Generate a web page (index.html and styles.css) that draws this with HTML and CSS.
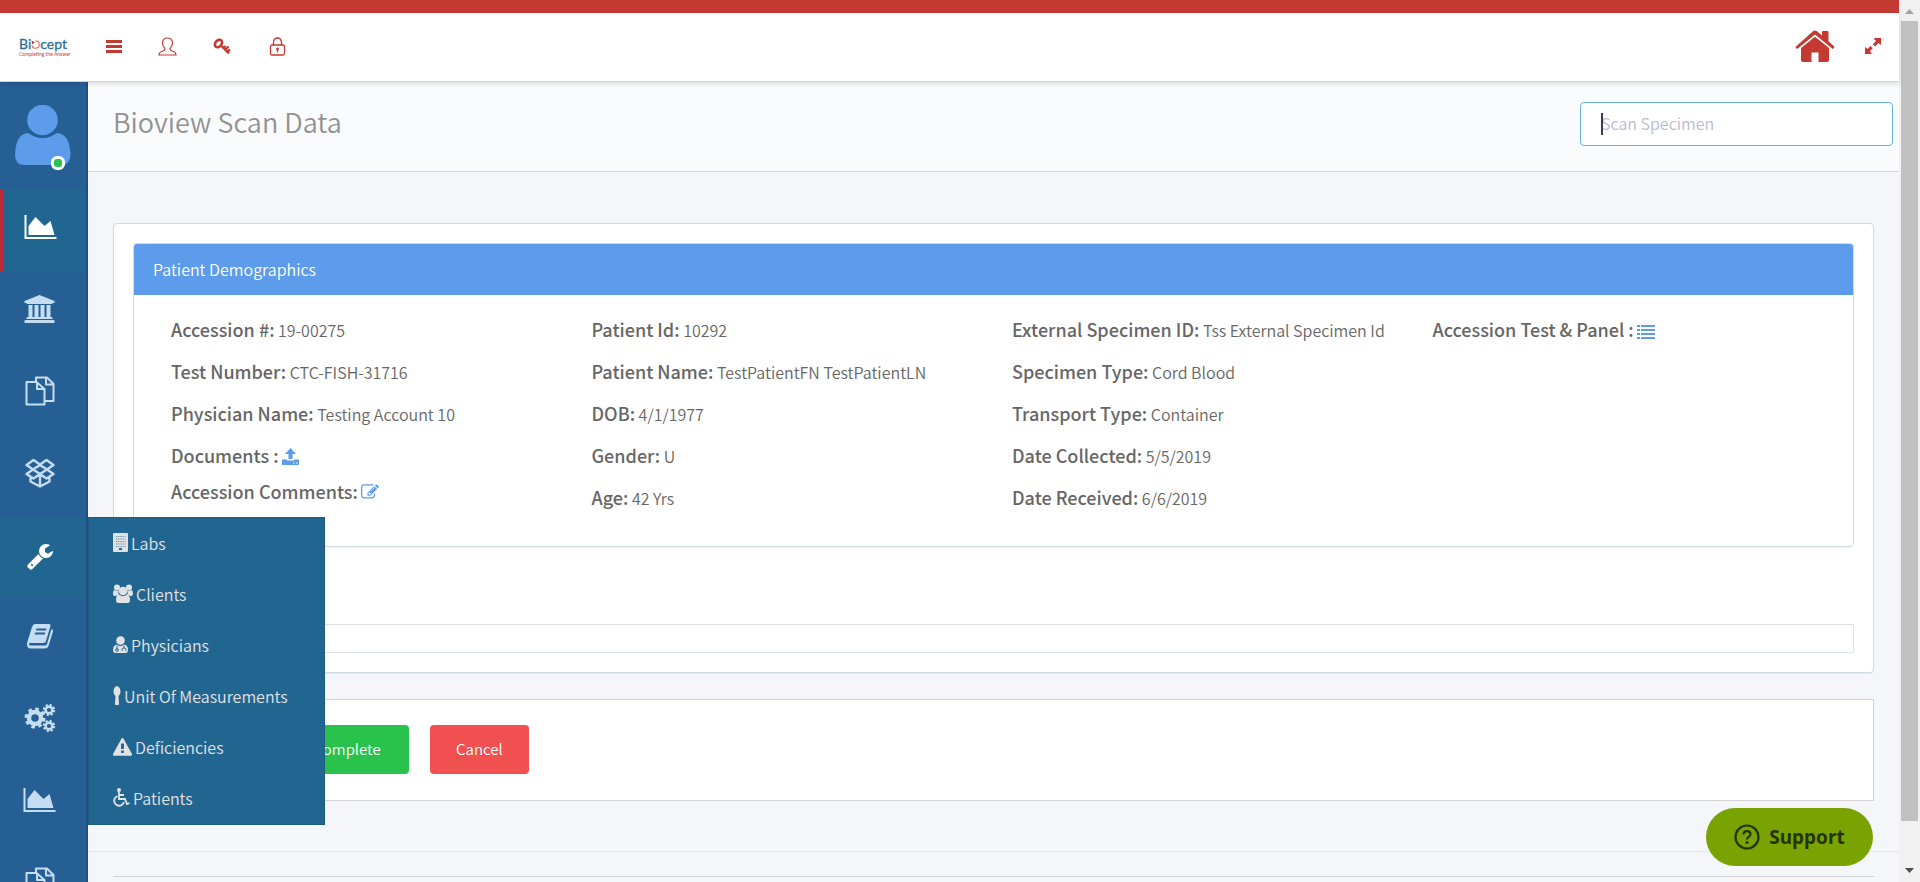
FILE: index.html
```html
<!DOCTYPE html>
<html lang="en">
<head>
<meta charset="utf-8">
<title>Bioview Scan Data</title>
<link rel="stylesheet" href="styles.css">
</head>
<body>
<svg class="sprite" aria-hidden="true">
  <symbol id="i-area" viewBox="0 0 2048 1792"><path d="M2048 1536v128H0V128h128v1408zM1664 512l256 896H256V832l448-576 576 576z"/></symbol>
  <symbol id="i-bank" viewBox="0 0 1920 1792"><path d="M960 0l960 384v128h-128q0 26-20.5 45t-48.5 19h-1526q-28 0-48.5-19t-20.5-45h-128v-128zM256 640h256v768h128v-768h256v768h128v-768h256v768h128v-768h256v768h59q28 0 48.5 19t20.5 45v64h-1664v-64q0-26 20.5-45t48.5-19h59zM1851 1600q28 0 48.5 19t20.5 45v128h-1920v-128q0-26 20.5-45t48.5-19z"/></symbol>
  <symbol id="i-docs" viewBox="0 0 30 30"><g fill="none" stroke="currentColor" stroke-width="2" stroke-linejoin="round"><path d="M1.500 6H11.500L19.500 13V28.500H1.500ZM12 6V13H19M11 5.500V1.500H22L28.500 8V25H20M21 2V8.500H28"/></g></symbol>
  <symbol id="i-box" viewBox="0 0 30 30"><g fill="none" stroke="currentColor" stroke-width="2.400" stroke-linejoin="round"><path d="M8.500 2L15 6.500L21.500 2L28.500 7L22 11.500L28.500 16L21.500 20.500L15 16L8.500 20.500L1.500 16L8 11.500L1.500 7ZM8 11.500L15 7L22 11.500L15 16ZM5.500 19V23.500L15 28.500L24.500 23.500V19M15 17V28"/></g></symbol>
  <symbol id="i-wrench" viewBox="0 0 1792 1792"><path d="M448 1472q0-26-19-45t-45-19-45 19-19 45 19 45 45 19 45-19 19-45zm644-420l-682 682q-37 37-90 37-52 0-91-37l-106-108q-38-36-38-90 0-53 38-91l681-681q39 98 114.500 173.500t173.500 114.500zm634-435q0 39-23 106-47 134-164.500 217.500t-258.500 83.500q-185 0-316.500-131.500t-131.500-316.500 131.500-316.500 316.500-131.500q58 0 121.500 16.500t107.500 46.500q16 11 16 28t-16 28l-293 169v224l193 107q5-3 79-48.500t135.500-81 70.500-35.500q15 0 23.500 10t8.500 25z"/></symbol>
  <symbol id="i-book" viewBox="0 0 28 26"><path fill-rule="evenodd" d="M9 1H23Q25 1 24.500 3L20 18Q19.500 20 17.500 20H4Q3 20 3 21Q3 22.500 5 22.500H19Q20.500 22.500 21 21L25.500 6Q27.500 6.500 27 8.500L22.500 23Q21.500 25.500 19 25.500H5Q1 25.500 1 21.500Q1 20 1.500 18.500L6 4Q7 1 9 1ZM10.500 5.500L10 7.500H20L20.500 5.500ZM9.200 9.500L8.700 11.500H18.700L19.200 9.500Z"/></symbol>
  <symbol id="i-cogs" viewBox="0 0 32 30"><g fill="none" stroke="currentColor"><circle cx="11" cy="15" r="6" stroke-width="4.500"/><circle cx="11" cy="15" r="9" stroke-width="3" stroke-dasharray="3.570 3.500"/><circle cx="25" cy="7" r="3.400" stroke-width="2.600"/><circle cx="25" cy="7" r="5.200" stroke-width="2" stroke-dasharray="2.100 1.984"/><circle cx="25" cy="23" r="3.400" stroke-width="2.600"/><circle cx="25" cy="23" r="5.200" stroke-width="2" stroke-dasharray="2.100 1.984"/></g></symbol>
  <symbol id="i-user" viewBox="0 0 19 19"><path fill="none" stroke="currentColor" stroke-width="1.200" d="M7 11.500Q4.500 9 4.500 5.500Q5 1 9.500 1Q14 1 14.500 5.500Q14.500 9 12 11.500Q12 13 14 14Q18 15 18 18H1Q1 15 5 14Q7 13 7 11.500Z"/></symbol>
  <symbol id="i-key" viewBox="0 0 20 17"><g fill="none" stroke="currentColor"><ellipse cx="5.500" cy="5.500" rx="3" ry="4.200" transform="rotate(42 5.500 5.500)" stroke-width="2.600"/><path stroke-width="2.300" d="M8.500 8L16 15.500M12.500 11.500L15.500 8.500M10.800 9.800L12.500 8M14.500 13.500L17 11.500"/></g></symbol>
  <symbol id="i-lock" viewBox="0 0 17 19"><g fill="none" stroke="currentColor" stroke-width="1.300"><rect x="1.500" y="8" width="14" height="10" rx="1.500"/><path d="M4.500 8V5Q5 1 8.500 1Q12 1 12.500 5V8M8.500 12V15.500"/></g><circle cx="8.500" cy="12" r="1.400"/></symbol>
  <symbol id="i-home" viewBox="0 0 40 32"><path d="M1 16.500L18 1.200Q20 0 22 1.200L27 5.500V2Q27 1 28 1H32.500Q33.500 1 33.500 2V11.300L39 16.200Q39.800 17 39 18L37.800 19L20 4.500L2.200 19L1 18Q.2 17 1 16.500ZM6 18L20 6.800L34 18V30Q34 32 32 32H23.500V22.500H16.500V32H8Q6 32 6 30Z"/></symbol>
  <symbol id="i-expand" viewBox="0 0 16 16"><path d="M9 1Q9 0 10 0H16V6Q16 7 15 6.500L13.500 5L10 8.500L7.800 6.200L11 3ZM0 10Q0 9 1 9.500L2.500 11L5.500 8L7.800 10.200L4.800 13.200L6.500 15Q7 16 6 16H0Z"/></symbol>
  <symbol id="i-upload" viewBox="0 0 17 17"><path d="M8.500 0L14 6H10.500V11H6.500V6H3ZM0 11.500H5V12.500H12V11.500H17V17H0ZM11 14.500V15.500H12.500V14.500ZM14 14.500V15.500H15.500V14.500Z" fill-rule="evenodd"/></symbol>
  <symbol id="i-edit" viewBox="0 0 1792 1792"><path fill-rule="evenodd" d="M888 1184l116-116-152-152-116 116v56h96v96h56zm440-720q-16-16-33 1l-350 350q-17 17-1 33t33-1l350-350q17-17 1-33zm80 594v190q0 119-84.500 203.500t-203.500 84.500h-832q-119 0-203.500-84.500t-84.500-203.500v-832q0-119 84.500-203.500t203.500-84.500h832q63 0 117 25 15 7 18 23 3 17-9 29l-49 49q-14 14-32 8-23-6-45-6h-832q-66 0-113 47t-47 113v832q0 66 47 113t113 47h832q66 0 113-47t47-113v-126q0-13 9-22l64-64q15-15 35-7t20 29zm-96-738l288 288-672 672h-288v-288zm444 132l-92 92-288-288 92-92q28-28 68-28t68 28l152 152q28 28 28 68t-28 68z"/></symbol>
  <symbol id="i-list" viewBox="0 0 18 14"><path d="M0 0H3V2H0ZM4 0H18V2H4ZM0 4H3V6H0ZM4 4H18V6H4ZM0 8H3V10H0ZM4 8H18V10H4ZM0 12H3V14H0ZM4 12H18V14H4Z"/></symbol>
  <symbol id="i-building" viewBox="0 0 15 19"><path fill-rule="evenodd" d="M1 0H14Q15 0 15 1V18Q15 19 14 19H1Q0 19 0 18V1Q0 0 1 0ZM6 15V17H9V15Z"/><path stroke="#216691" stroke-width="1" stroke-opacity=".7" stroke-dasharray="1.200 1" d="M3 3.500H12.500M3 6H12.500M3 8.500H12.500M3 11H12.500M3 13.500H12.500"/></symbol>
  <symbol id="i-users" viewBox="0 0 20 19"><circle cx="4" cy="3.500" r="3"/><circle cx="16" cy="3.500" r="3"/><path d="M0 10Q0 6 2 6Q4 7.500 6 6.500Q4.500 9 6 10.500Q4 11 3 12H2Q0 12 0 10ZM20 10Q20 6 18 6Q16 7.500 14 6.500Q15.500 9 14 10.500Q16 11 17 12H18Q20 12 20 10ZM3 16Q3 11 6 10.500Q10 14 14 10.500Q17 11 17 16Q17 19 14.500 19H5.500Q3 19 3 16Z"/><circle cx="10" cy="7" r="4.300"/></symbol>
  <symbol id="i-doctor" viewBox="0 0 15 17"><circle cx="7.500" cy="4.500" r="4.300"/><path d="M0 14Q0 9 4 8.500Q7.500 11.500 11 8.500Q15 9 15 14Q15 17 12.500 17H2.500Q0 17 0 14Z"/><path fill="none" stroke="#216691" d="M4 9.500V13M11 9.500V12M9 15V13.500Q9 12 11 12Q13 12 13 13.500V15"/><circle cx="4" cy="14" r="1.300" fill="none" stroke="#216691"/></symbol>
  <symbol id="i-spoon" viewBox="0 0 8 19"><path d="M4 0Q7.500 1 7.500 6Q7.500 8.500 5.500 10L6 18Q6 19 5 19H3Q2 19 2 18L2.500 10Q.5 8.500 .5 6Q.5 1 4 0Z"/></symbol>
  <symbol id="i-warn" viewBox="0 0 1792 1664"><path fill-rule="evenodd" d="M1024 1375v-190q0-14-9.500-23.500t-22.500-9.500h-192q-13 0-22.500 9.500t-9.500 23.500v190q0 14 9.500 23.500t22.500 9.500h192q13 0 22.500-9.500t9.500-23.500zm-2-374l18-459q0-12-10-19-13-11-24-11h-220q-11 0-24 11-10 7-10 21l17 457q0 10 10 16.500t24 6.500h185q14 0 23.500-6.500t10.500-16.500zm-14-934l768 1408q35 63-2 126-17 29-46.500 46t-63.500 17h-1536q-34 0-63.500-17t-46.500-46q-37-63-2-126l768-1408q17-31 47-49t65-18 65 18 47 49z"/></symbol>
  <symbol id="i-wheel" viewBox="0 0 17 19"><circle cx="6" cy="2" r="2"/><path fill="none" stroke="currentColor" stroke-width="1.800" d="M6 3V11H12L14 16L16.500 15M6 7H11M4.500 8A5 5 0 1 0 11 14"/></symbol>
</svg>

<div class="app">
  <div class="topline"></div>
  <header class="header">
    <a class="logo" href="#" aria-label="Biocept home">
      <span class="logo-name">Bi<svg viewBox="0 0 9 9"><path d="M4.500 .8A3.700 3.700 0 1 1 1 5.500" fill="none" stroke="#e07a72" stroke-width="1.200"/><path d="M.5 .5L4 2.200L1.200 4.500Z" fill="#c43a33"/></svg>cept</span>
      <span class="logo-tag">Completing the Answer</span>
    </a>
    <nav class="tools">
      <button class="tool" aria-label="Toggle menu"><span class="burger"></span></button>
      <button class="tool" aria-label="Profile"><svg width="19" height="19"><use href="#i-user"/></svg></button>
      <button class="tool" aria-label="Change password"><svg width="20" height="17"><use href="#i-key"/></svg></button>
      <button class="tool" aria-label="Lock"><svg width="17" height="19"><use href="#i-lock"/></svg></button>
    </nav>
    <a class="home" href="#" aria-label="Home"><svg width="40" height="32"><use href="#i-home"/></svg></a>
    <button class="expand" aria-label="Full screen"><svg width="16" height="16"><use href="#i-expand"/></svg></button>
  </header>

  <div class="body">
    <aside class="sidebar">
      <div class="avatar">
        <svg width="56" height="62" viewBox="0 0 56 62"><path d="M13 28Q27.500 38 42 28Q55 29 55.500 50Q55 60 46 60H9.500Q0 60 0 50Q.500 29 13 28Z"/><circle cx="27.500" cy="15.500" r="17.500" fill="#265f93"/><circle cx="27.500" cy="15" r="15.300"/></svg>
        <span class="online"></span>
      </div>
      <nav class="side-nav">
        <a class="side-item current selected" href="#" aria-label="Dashboard"><svg width="33" height="28"><use href="#i-area"/></svg></a>
        <a class="side-item" href="#" aria-label="Institution"><svg width="31" height="28"><use href="#i-bank"/></svg></a>
        <a class="side-item" href="#" aria-label="Documents"><svg width="30" height="30"><use href="#i-docs"/></svg></a>
        <a class="side-item" href="#" aria-label="Packages"><svg width="30" height="30"><use href="#i-box"/></svg></a>
        <div class="side-group">
          <a class="side-item current" href="#" aria-label="Setup"><svg width="28" height="28"><use href="#i-wrench"/></svg></a>
          <div class="flyout">
            <a href="#"><svg width="15" height="19"><use href="#i-building"/></svg>Labs</a>
            <a href="#"><svg width="20" height="19"><use href="#i-users"/></svg>Clients</a>
            <a href="#"><svg width="15" height="17"><use href="#i-doctor"/></svg>Physicians</a>
            <a href="#"><svg width="8" height="19"><use href="#i-spoon"/></svg>Unit Of Measurements</a>
            <a href="#"><svg width="19" height="18"><use href="#i-warn"/></svg>Deficiencies</a>
            <a href="#"><svg width="17" height="19"><use href="#i-wheel"/></svg>Patients</a>
          </div>
        </div>
        <a class="side-item" href="#" aria-label="Library"><svg width="28" height="26"><use href="#i-book"/></svg></a>
        <a class="side-item" href="#" aria-label="Settings"><svg width="32" height="30"><use href="#i-cogs"/></svg></a>
        <a class="side-item" href="#" aria-label="Reports"><svg width="33" height="28"><use href="#i-area"/></svg></a>
        <a class="side-item" href="#" aria-label="Files"><svg width="30" height="30"><use href="#i-docs"/></svg></a>
      </nav>
    </aside>

    <main class="main">
      <div class="titlebar">
        <h1>Bioview Scan Data</h1>
        <div class="scan"><span class="caret"></span><input type="text" placeholder="Scan Specimen" aria-label="Scan Specimen"></div>
      </div>
      <div class="content">
        <section class="card">
          <section class="panel">
            <h2>Patient Demographics</h2>
            <div class="facts">
              <div class="col">
                <p><b>Accession #:</b> 19-00275</p>
                <p><b>Test Number:</b> CTC-FISH-31716</p>
                <p><b>Physician Name:</b> Testing Account 10</p>
                <p class="tight"><b>Documents :</b> <a href="#" aria-label="Upload"><svg width="17" height="17"><use href="#i-upload"/></svg></a></p>
                <p><b>Accession Comments:</b> <a href="#" aria-label="Edit comments"><svg width="18" height="18"><use href="#i-edit"/></svg></a></p>
              </div>
              <div class="col">
                <p><b>Patient Id:</b> 10292</p>
                <p><b>Patient Name:</b> TestPatientFN TestPatientLN</p>
                <p><b>DOB:</b> 4/1/1977</p>
                <p><b>Gender:</b> U</p>
                <p><b>Age:</b> 42 Yrs</p>
              </div>
              <div class="col">
                <p><b>External Specimen ID:</b> Tss External Specimen Id</p>
                <p><b>Specimen Type:</b> Cord Blood</p>
                <p><b>Transport Type:</b> Container</p>
                <p><b>Date Collected:</b> 5/5/2019</p>
                <p><b>Date Received:</b> 6/6/2019</p>
              </div>
              <div class="col">
                <p><b>Accession Test &amp; Panel :</b> <a href="#" aria-label="Test list"><svg width="18" height="14"><use href="#i-list"/></svg></a></p>
              </div>
            </div>
          </section>
          <div class="grid-empty"></div>
        </section>
        <section class="actions">
          <button class="btn ok">Complete</button>
          <button class="btn cancel">Cancel</button>
        </section>
      </div>
      <footer class="footer"><hr></footer>
      <button class="support"><svg width="26" height="26" viewBox="0 0 26 26"><g fill="none" stroke="currentColor" stroke-width="2.200"><circle cx="13" cy="13" r="11.500"/><path d="M9.500 10.500Q9.500 7.200 13 7.200Q16.500 7.200 16.500 10.200Q16.500 12 14.500 13Q13 13.800 13 15.500"/></g><circle cx="13" cy="18.500" r="1.500"/></svg>Support</button>
    </main>
  </div>
</div>
<div class="scrollbar" aria-hidden="true">
  <svg width="9" height="5" viewBox="0 0 9 5"><path fill="#a3a3a3" d="M0 5L4.500 0L9 5Z"/></svg>
  <span class="thumb"></span>
  <svg width="9" height="5" viewBox="0 0 9 5"><path fill="#505050" d="M0 0H9L4.500 5Z"/></svg>
</div>
</body>
</html>
```
FILE: styles.css
```css
* { box-sizing: border-box; }
body {
  margin: 0;
  height: 100vh;
  display: flex;
  overflow: hidden;
  font-family: "Noto Sans CJK SC", "Open Sans", sans-serif;
  font-size: 16px;
  font-weight: 350;
  line-height: 26px;
  color: #666;
  background: #f5f6fa;
}
svg { fill: currentColor; flex: none; }
a { color: inherit; text-decoration: none; }
button { font: inherit; border: 0; background: none; padding: 0; cursor: pointer; color: inherit; }
h1, h2, p { margin: 0; }
.sprite { position: absolute; width: 0; height: 0; }

.app { flex: 1; min-width: 0; display: flex; flex-direction: column; }
.topline { flex: none; height: 13px; background: #c43a33; }
.header {
  flex: none;
  height: 69px;
  display: flex;
  align-items: center;
  padding: 0 18px 2px 19px;
  background: #fff;
  border-bottom: 1px solid #cfd6d8;
  box-shadow: 0 2px 5px rgba(0, 0, 0, .12);
  color: #c43a33;
  position: relative;
  z-index: 2;
}
.logo { width: 87px; display: flex; flex-direction: column; }
.logo-name { font: 14px/15px Lato, sans-serif; color: #2b6f98; display: flex; align-items: center; -webkit-text-stroke: 0.3px #2b6f98; }
.logo-name svg { width: 9px; height: 9px; margin-top: 3px; }
.logo-tag { font: 5px/6px Lato, sans-serif; }
.tools { flex: 1; display: flex; align-items: center; gap: 36px; }
.tool { display: flex; }
.burger { width: 16px; height: 13px; border-top: 3px solid; border-bottom: 3px solid; display: flex; align-items: center; }
.burger::before { content: ""; width: 16px; height: 3px; background: currentColor; }
.home { display: flex; margin-right: 30px; }
.expand { display: flex; }

.body { flex: 1; min-height: 0; display: flex; }
.sidebar { width: 88px; flex: none; background: #265f93; border-right: 2px solid #1f5080; color: #c5ddf2; position: relative; z-index: 1; }
.avatar { height: 107px; padding: 23px 0 0 15px; color: #5d9beb; position: relative; }
.online { position: absolute; left: 51px; top: 74px; width: 14px; height: 14px; border: 3px solid #fff; border-radius: 6px; background: #28c24c; }
.side-item { height: 82px; padding: 0 7px 7px 0; display: flex; align-items: center; justify-content: center; }
.current { height: 81px; padding-bottom: 3px; background: #216691; color: #fff; }
.selected { height: 82px; padding-bottom: 6px; border-left: 4px solid #bd2c33; padding-right: 10px; }
.side-group { position: relative; }
.flyout {
  position: absolute;
  left: 88px;
  top: 0;
  width: 237px;
  background: #216691;
  border: 1px solid #1e5a82;
  color: #e2e2e4;
}
.flyout a { height: 51px; padding: 0 0 2px 24px; display: flex; align-items: center; gap: 3px; }

.main { flex: 1; min-width: 0; position: relative; display: flex; flex-direction: column; }
.titlebar {
  height: 90px;
  flex: none;
  display: flex;
  align-items: center;
  justify-content: space-between;
  padding: 0 6px 6px 25px;
  background: #fafbfd;
  border-bottom: 1px solid #cfd9e0;
}
h1 { font-size: 27px; line-height: 36px; font-weight: 350; color: #929292; margin-bottom: 4px; }
.scan { position: relative; width: 313px; }
.scan input {
  width: 100%;
  height: 44px;
  border: 1px solid #66afe9;
  border-radius: 4px;
  padding: 0 20px 2px;
  font: inherit;
  background: #fff;
  outline: 0;
}
.scan input::placeholder { color: #b9bccd; opacity: 1; }
.caret { position: absolute; left: 21px; top: 11px; width: 2px; height: 22px; background: #3a3a50; }

.content { flex: none; padding: 51px 25px 0; }
.card { background: #fff; border: 1px solid #cfdbe2; border-radius: 4px; padding: 19px; box-shadow: 0 1px 1px rgba(0, 0, 0, .05); }
.panel { border: 1px solid #cfdbe2; border-radius: 4px; overflow: hidden; box-shadow: 0 1px 1px rgba(0, 0, 0, .05); }
h2 { padding: 12px 19px; font-size: 16px; line-height: 27px; font-weight: 350; color: #fff; background: #5d9beb; }
.facts { display: grid; grid-template-columns: repeat(4, 1fr); padding: 22px 0 35px 37px; }
.col p { line-height: 26px; margin-bottom: 16px; white-space: nowrap; }
.col p:last-child { margin-bottom: 0; }
.col .tight { margin-bottom: 10px; }
b { font-size: 18px; line-height: 20px; font-weight: 500; }
.col a { color: #5d9beb; }
.col a svg { vertical-align: -2px; }
.grid-empty { margin-top: 77px; height: 29px; border: 1px solid #dde6e9; border-top-color: #ddd; }
.actions { margin-top: 26px; background: #fff; border: 1px solid #d3d3d3; padding: 25px 25px 26px 171px; display: flex; gap: 21px; }
.btn { height: 49px; padding: 0 26px 2px; border-radius: 4px; color: #fff; font-size: 15px; }
.ok { background: #28c24c; min-width: 124px; }
.cancel { background: #f05050; }
.footer { margin-top: 50px; padding: 24px 25px 0; border-top: 1px solid #e4eaec; }
.footer hr { margin: 0; border: 0; border-top: 1px solid #cfd3d6; }
.support {
  position: absolute;
  right: 26px;
  bottom: 16px;
  height: 58px;
  width: 167px;
  border-radius: 29px;
  background: #78a300;
  color: #25330a;
  font: 700 19px/26px "Noto Sans", sans-serif;
  display: flex;
  align-items: center;
  justify-content: center;
  gap: 9px;
}

.scrollbar { width: 21px; flex: none; background: #f1f1f1; display: flex; flex-direction: column; align-items: center; padding: 9px 0; }
.thumb { width: 17px; flex: 1; margin: 7px 0 47px; background: #c1c1c1; }
```
